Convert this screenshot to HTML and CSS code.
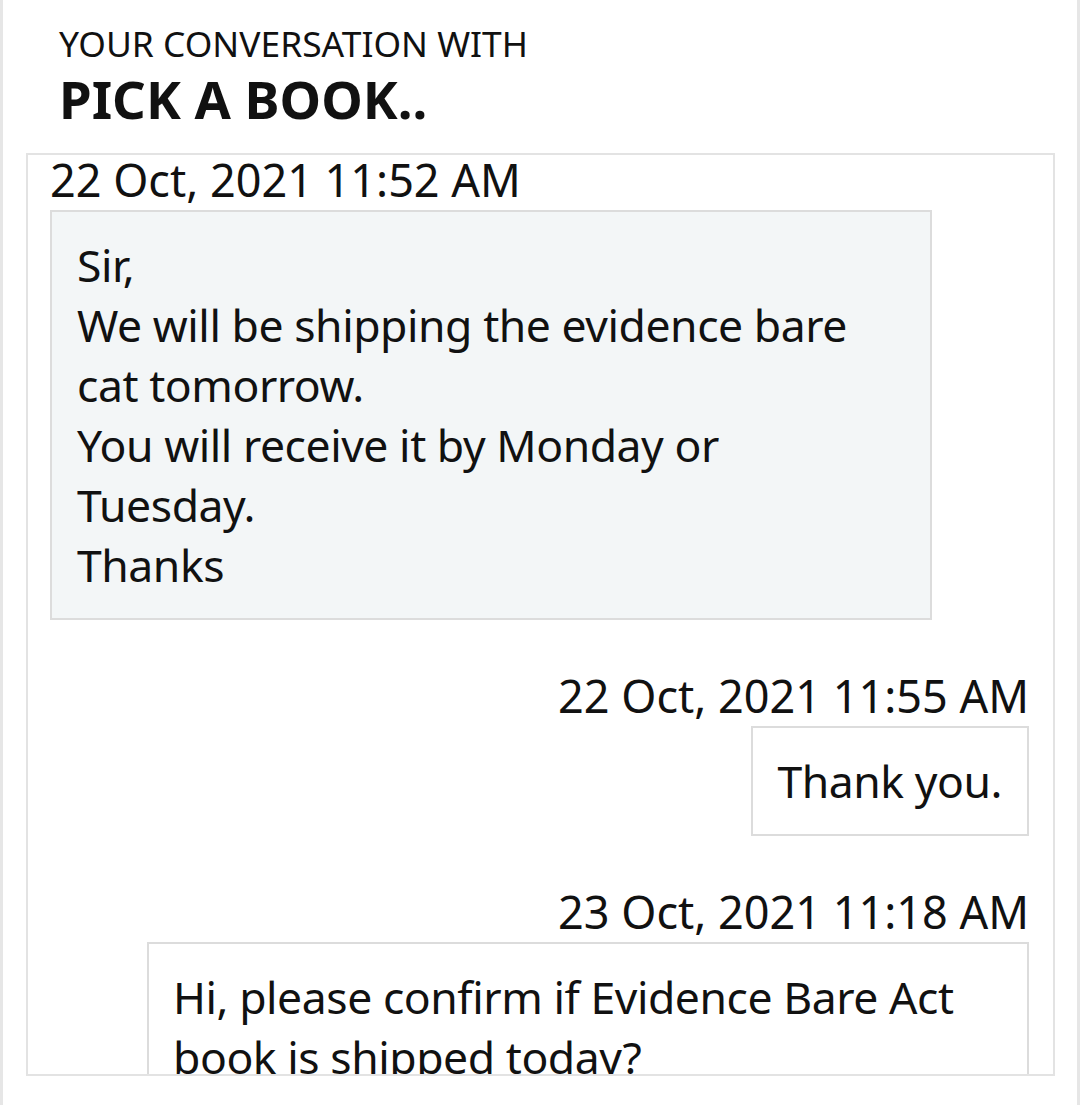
FILE: index.html
```html
<!DOCTYPE html>
<html lang="en">
<head>
<meta charset="utf-8">
<title>Your conversation with Pick a Book..</title>
<link rel="stylesheet" href="styles.css">
</head>
<body>
<div class="page">
  <header class="head">
    <div class="sub">YOUR CONVERSATION WITH</div>
    <h1 class="title">PICK A BOOK..</h1>
  </header>
  <section class="thread">
    <div class="thread-body">
      <div class="msg msg-in">
        <div class="time">22 Oct, 2021 11:52 AM</div>
        <div class="bubble bubble-in">Sir,<br>We will be shipping the evidence bare cat tomorrow.<br>You will receive it by Monday or Tuesday.<br>Thanks</div>
      </div>
      <div class="msg msg-out">
        <div class="time">22 Oct, 2021 11:55 AM</div>
        <div class="bubble">Thank you.</div>
      </div>
      <div class="msg msg-out">
        <div class="time">23 Oct, 2021 11:18 AM</div>
        <div class="bubble">Hi, please confirm if Evidence Bare Act book is shipped today?</div>
      </div>
    </div>
  </section>
</div>
</body>
</html>
```
FILE: styles.css
```css
* { box-sizing: border-box; }
html, body { margin: 0; padding: 0; background: #fff; }
body {
  font-family: "Noto Sans", "Open Sans", sans-serif;
  color: #111;
}
.page {
  width: 1080px;
  height: 1105px;
  border-left: 3px solid #e6e6e6;
  border-right: 3px solid #e6e6e6;
  overflow: hidden;
}
.head {
  padding: 22px 0 0 56px;
}
.sub {
  font-size: 35.4px;
  line-height: 42px;
  font-weight: 400;
}
.title {
  margin: 5px 0 0;
  font-size: 52.6px;
  line-height: 60px;
  font-weight: 700;
}
.thread {
  margin: 24px 0 0 23px;
  width: 1029px;
  height: 923px;
  border: 2px solid #e3e3e3;
}
.thread-body {
  height: 100%;
  padding: 0 24px 0 22px;
  clip-path: inset(-40px -40px 0 -40px);
  display: flex;
  flex-direction: column;
  gap: 51px;
}
.msg {
  display: flex;
  flex-direction: column;
  flex-shrink: 0;
}
.msg-in { align-items: flex-start; }
.msg-out { align-items: flex-end; }
.time {
  font-size: 45px;
  line-height: 50px;
  margin-bottom: 5px;
}
.bubble {
  max-width: 882px;
  border: 2px solid #dcdcdc;
  background: #fff;
  padding: 23px 25px 23px 24px;
  font-size: 44.5px;
  letter-spacing: -0.45px;
  line-height: 60px;
}
.bubble-in {
  width: 882px;
  padding-left: 25px;
  background: #f3f6f7;
}
```
